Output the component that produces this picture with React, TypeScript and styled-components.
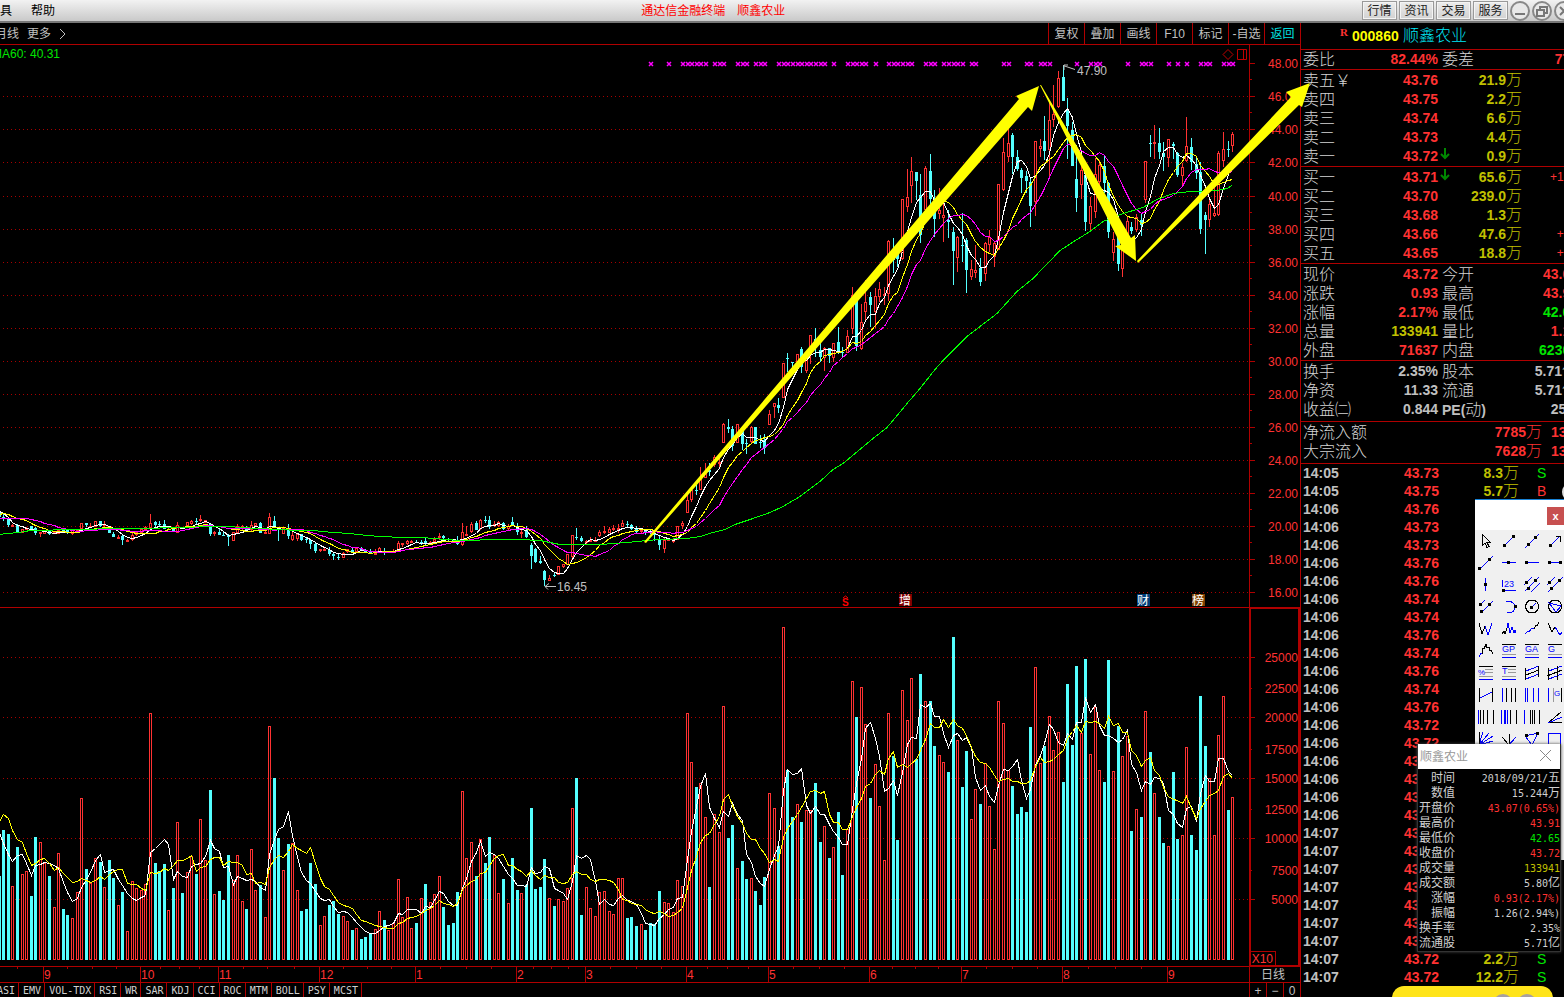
import React from "react";
import styled, { createGlobalStyle, css } from "styled-components";

const RED = "#ff3232";
const LINE = "#b00000";
const CYAN = "#54ffff";
const GREY = "#c0c0c0";
const GOLD = "#c0c000";
const GREEN = "#00e600";
const SANS = `"Liberation Sans", "Noto Sans CJK SC", sans-serif`;
const MONO = `"DejaVu Sans Mono", "Noto Sans CJK SC", monospace`;

const GlobalStyle = createGlobalStyle`
  *, *::before, *::after { box-sizing: border-box; }
  body { margin: 0; background: #000; overflow: hidden; }
  button { font: inherit; color: inherit; background: none; border: 0; padding: 0; margin: 0; cursor: pointer; }
  table { border-collapse: collapse; border-spacing: 0; table-layout: fixed; }
  td, th { padding: 0; font-weight: normal; text-align: left; }
`;

/* ---------- chart data: every reading is in thirds of a pixel ---------- */

const BAR_STEP = 4.586;
const barX = (i: number) => Math.round(3.2 + i * BAR_STEP);
const FIRST = -1;

const VOLUME = `c828 c690 c702 r859 c741 r823 r814 c888 c711 r727 r790 c828 r922 r760 c927 c945 r955 r877 r595 c807 r850
r775 c786 r862 c780 c834 r916 c876 r994 r844 r865 r871 r853 r340 c789 c814 c792 r931 c864 r667 c879 r817 r769 c822 r658
r781 c570 r883 c873 c900 c765 r841 r766 r904 c927 r748 r871 c855 r952 r379 c534 c714 r811 c732 r730 r871 c933 c927 c789
c852 r976 r949 c915 c903 c942 r949 r964 c990 r985 c1017 c1011 c999 r988 r934 c960 r990 r970 r838 r952 r892 r985 c969
r895 c852 r907 r883 r829 c921 c975 c969 c876 r574 r775 r727 c828 r718 c789 c711 r766 r880 c837 r910 c774 c870 r880 c855
c624 c867 c861 c777 r895 c918 r898 r904 r865 r625 c534 c945 r862 r925 r949 r877 r874 r934 r943 r835 r835 c954 c951 c978
r973 c990 c969 c972 c873 r907 r910 r937 r841 r859 r340 r487 c561 r550 r652 c861 r643 r697 r319 c714 c675 r805 c783 c837
r835 c873 c915 c831 r580 r625 c738 r82 c510 c651 r613 c666 r631 r631 c549 c726 r679 c774 r742 c636 c825 r688 r244 c351
r262 r373 c594 r493 r619 r781 r340 c468 c720 r271 r361 r235 c477 c222 r304 c303 c438 r466 r487 c516 c111 r421 c561 c453
r658 r568 c612 r490 r619 r748 r304 r370 r511 c558 c642 c621 c636 c381 r202 r490 c438 r349 r451 r397 c546 c252 c435 c198
r400 c177 r463 r322 r511 c546 c180 r514 c378 r469 r409 c693 r628 c651 r334 c456 r580 c651 c729 r739 c516 c717 r706 r442
c705 c750 c288 c438 r535 r706 r406 r289 c630 r592`
  .split(/\s+/)
  .map((s) => ({ up: s[0] === "r", top: Number(s.slice(1)) }));

/* colour, high, body top, body bottom, low */
const EARLY = `c340,340,350,350 c342,350,358,362 c355,357,375,380 r372,375,380,380 c373,375,396,399 r388,388,398,398 r380,383,387,390
c378,379,388,388 c381,385,400,405 r396,397,401,411 r391,393,401,402 c391,392,402,405 r395,397,400,402 r387,389,401,401
c388,389,397,397 c389,391,400,402 r390,391,402,404 r386,388,394,395 r370,370,387,390 c369,370,375,381 r369,378,383,384
r363,363,380,382 c363,364,379,381 r363,372,376,380 c380,383,398,399 c396,402,411,411 r405,411,413,413 c405,408,419,435
r417,420,423,426 r400,405,421,422 r393,397,406,408 r385,388,398,402 r378,380,390,392 r342,370,384,384 c363,366,375,382
c363,373,376,378 c360,373,386,388 r378,378,383,390 c380,382,392,393 r367,375,398,398 c380,381,386,386 r366,367,378,380
r360,364,371,376 c354,364,367,376 r345,358,363,366 r361,361,368,370 c369,372,402,408 r394,395,403,407 c386,396,405,406
c393,404,408,408 c402,406,412,438 r396,397,422,422 r372,379,398,400 r374,378,381,390 c378,381,389,392 r363,374,391,392
r369,370,377,382 c366,369,398,399 r390,397,399,402 r339,352,401,401 c348,363,380,384 c381,382,390,423 r381,383,401,402
c373,384,408,416 r396,405,419,422 r402,402,417,422 c402,403,420,422 c411,417,420,429 c417,421,431,447 c430,432,454,459
r447,448,453,455 r441,447,450,453 c441,449,462,467 c459,462,468,480 c461,471,473,480 r456,458,473,474 r446,448,457,460
c442,451,456,459 r444,445,456,458 c440,443,450,452 c446,449,455,457 c448,452,461,462 r447,458,463,465 r441,445,455,459
c444,452,455,465 r453,454,457,458 r447,452,455,458 r423,430,450,450 r429,430,434,441 r420,424,431,434 r420,424,428,429
c420,426,429,430 c420,427,431,435 c415,424,430,435 r424,425,428,430 r411,416,427,428 r399,409,414,420 c405,408,414,417
c414,417,420,422 c418,420,424,425 c408,421,431,434 r369,397,436,438 r379,402,404,405 r366,373,397,399 c363,369,389,391
r357,361,387,389 c348,360,363,369 c348,361,382,387 r364,373,378,382 r363,367,378,380 c366,368,388,390 r373,377,388,390
c351,367,374,376 c369,377,396,405 r389,396,402,415 c378,391,411,415 c429,436,467,507 c444,446,485,488 c469,483,488,491
c510,512,540,558 r526,535,542,543 c517,524,528,530 r498,499,525,526 r492,493,502,504 r461,463,496,496 r405,406,470,475
c384,410,414,420 c408,415,422,425 r420,424,429,436 r411,421,425,427 r412,420,424,425 r391,397,407,411 r378,392,397,403
r380,387,398,399 r375,385,390,393 r372,384,387,398 r360,369,380,382 c363,373,376,380 c372,374,388,390 c378,388,396,399
r383,389,393,400 c388,390,399,404 c388,394,399,401 c397,402,406,423 c406,421,435,450 r414,420,446,459 r413,416,419,420
r417,421,426,429 r378,379,421,421 r364,370,378,387 r278,300,338,339 r262,271,299,306 c243,270,273,285 r201,232,269,270
r190,213,233,234 c190,210,216,228 r165,171,196,200 r168,186,190,201 r69,72,128,128 c57,81,87,99 c78,88,138,152
r72,73,130,130 c86,89,131,150 c117,128,132,162 r79,82,125,129 c81,82,131,133 c105,125,128,144 c102,120,143,162
r30,42,74,75 r10,10,20,54`;
const LATE = `c1044,1065,1073,1089 r938,940,1043,1043 c909,925,927,965 c936,936,939,970 r912,913,935,950 c891,897,950,969
r910,915,962,968 r855,856,915,942 c834,867,890,921 c879,900,922,935 r891,895,924,963 c893,895,917,939 r879,880,925,936
c831,876,908,912 c891,905,908,921 r840,859,908,910 r711,735,838,852 c738,738,887,903 r762,817,898,899 r690,757,785,810
c726,741,765,831 r714,739,787,835 r696,718,742,755 r711,733,735,765 r570,573,733,752 c564,600,630,669 c590,600,627,651
r447,448,627,630 r357,442,470,486 r321,364,409,459 c366,366,392,450 c372,435,555,580 r348,355,480,490 c312,363,448,465
c420,455,507,560 r414,481,493,507 r430,495,503,576 c480,510,515,564 c531,546,602,705 r558,562,623,666 c490,585,588,636
c565,570,660,729 r630,658,681,690 r585,660,668,684 c624,654,696,708 r576,580,671,693 r540,562,584,606 r575,580,620,651
r402,403,599,600 r264,307,419,424 r235,280,320,336 c249,255,321,372 c300,321,357,363 c355,360,384,429 c363,378,392,429
c380,395,468,531 r272,274,455,498 r267,289,296,322 c198,273,303,330 r150,210,300,386 r105,193,211,230 r63,85,170,175
c45,81,153,153 c144,177,228,327 c216,240,348,348 c285,387,444,486 r340,361,404,447 c370,375,516,543 r440,469,523,543
r325,373,485,504 r330,345,397,410 c315,347,400,430 c395,400,546,564 r545,568,608,633 c530,540,641,663 r590,600,656,681
r501,513,560,590 c516,531,543,553 r492,501,540,545 c490,510,525,558 r333,334,449,460 c255,279,282,321 r225,277,279,327
c234,279,306,327 c276,309,321,363 r267,268,325,350 c276,283,288,327 c306,309,375,381 r340,352,377,408 r201,289,332,336
c264,290,336,360 c318,342,368,387 c336,366,537,552 c486,495,510,612 r450,463,509,531 r400,490,497,502 r303,310,496,498
r246,298,332,350 c273,297,300,321 r246,253,288,306`;

const parseCandles = (src: string, shift: number) =>
  src.split(/\s+/).map((s) => {
    const [high, top, bottom, low] = s.slice(1).split(",").map((n) => Number(n) + shift);
    return { up: s[0] === "r", high, top, bottom, low };
  });
const CANDLES = [...parseCandles(EARLY, 1050), ...parseCandles(LATE, 0)];

const average = (values: number[], n: number, lead: number[]) =>
  values.map((_, i) =>
    i < lead.length ? lead[i] : values.slice(Math.max(0, i - n + 1), i + 1).reduce((a, b) => a + b, 0) / Math.min(n, i + 1)
  );
const toLine = (values: number[], dy: number) =>
  values.map((v, i) => `${barX(i + FIRST) + 0.5},${Math.round(v / 3 + dy) + 0.5}`).join(" ");

const CLOSES = CANDLES.map((c) => (c.up ? c.top : c.bottom));
const up1050 = (a: number[]) => a.map((v) => v + 1050);
const MA5 = toLine(average(CLOSES, 5, up1050([334, 338, 352, 365, 375])), 5);
const MA10 = toLine(average(CLOSES, 10, up1050([342, 340, 343, 349, 354, 356, 359, 369, 376])), 5);
const MA15 = toLine(
  average(CLOSES, 15, up1050([355, 355, 354, 354, 354, 354, 354, 357, 360, 364, 368, 371, 376, 380, 384, 387, 389])),
  5
);
const MA60_POINTS: [number, number][] = [
  [0, 1451], [20, 1448], [60, 1446], [90, 1441], [140, 1440], [180, 1438], [260, 1437], [320, 1435], [460, 1435],
  [500, 1432], [570, 1431], [600, 1428], [690, 1429], [720, 1432], [780, 1435], [830, 1437], [900, 1439], [940, 1441],
  [1000, 1447], [1050, 1450], [1100, 1454], [1140, 1459], [1210, 1460], [1270, 1461], [1300, 1465], [1380, 1469],
  [1500, 1467], [1560, 1467], [1620, 1471], [1680, 1481], [1700, 1483], [1800, 1483], [1880, 1476], [1940, 1470],
  [1980, 1468], [2060, 1464], [2100, 1458], [2140, 1445], [2175, 1436], [2205, 1421], [2260, 1403], [2310, 1387],
  [2350, 1368], [2400, 1337], [2459, 1293], [2500, 1256], [2530, 1238], [2620, 1165], [2660, 1132], [2695, 1092],
  [2720, 1060], [2760, 1015], [2805, 957], [2830, 930], [2900, 857], [2990, 790], [3050, 724], [3100, 684], [3180, 600],
  [3230, 567], [3270, 543], [3310, 512], [3360, 493], [3430, 470], [3470, 448], [3520, 428], [3570, 422], [3650, 421],
  [3680, 413], [3696, 405],
];
const MA60 = MA60_POINTS.map(([x, y]) => `${Math.round(x / 3)},${Math.round(y / 3 + 5) + 0.5}`).join(" ");

const VOL_TOPS = VOLUME.map((v) => v.top);
const VMA5 = toLine(average(VOL_TOPS, 5, [697, 728, 762, 784, 764]), -8);
const VMA10 = toLine(average(VOL_TOPS, 10, [662, 643, 655, 690, 716, 727, 760, 795, 790]), -8);

const SIGNALS = [
  [141, 141], [145, 145], [148, 153], [155, 157], [160, 162], [164, 166], [169, 179], [181, 181], [184, 188], [190, 190],
  [193, 198], [201, 203], [205, 209], [211, 212], [218, 219], [223, 224], [226, 228], [234, 234], [237, 239], [245, 245],
  [248, 250], [254, 254], [256, 256], [258, 258], [261, 263], [266, 268],
].flatMap(([a, b]) => Array.from({ length: b - a + 1 }, (_, k) => a + k));

const PRICE_Y = [18, 51, 84, 117, 151, 184, 217, 250, 283, 316, 349, 382, 415, 448, 481, 514, 547];
const VOLUME_Y = [49, 80, 109, 141, 170, 201, 230, 262, 291];
const VOLUME_LABELS = ["25000", "22500", "20000", "17500", "15000", "12500", "10000", "7500", "5000"];

const MONTHS: [number, string][] = [
  [43, "9"], [140, "10"], [218, "11"], [319, "12"], [415, "1"], [516, "2"], [585, "3"], [686, "4"], [768, "5"],
  [869, "6"], [961, "7"], [1062, "8"], [1167, "9"],
];
const WEEKS = [
  17, 67, 92, 116, 160, 179, 199, 243, 267, 294, 343, 367, 391, 440, 466, 491, 533, 551, 568, 610, 636, 661, 707, 727,
  748, 793, 819, 844, 892, 915, 938, 986, 1012, 1037, 1088, 1115, 1141,
];

/* ---------- frame ---------- */

const Terminal = styled.div`
  position: relative;
  display: flex;
  flex-direction: column;
  min-height: 100vh;
  overflow: hidden;
  background: #000;
  color: ${GREY};
  font: 12px/14px ${SANS};
  white-space: nowrap;
`;
const TitleBar = styled.header`
  display: flex;
  align-items: center;
  height: 23px;
  overflow: hidden;
  background: linear-gradient(#f2f2f2, #c9c9c9);
  border-bottom: 2px solid #777;
  color: #000;
`;
const Menu = styled.nav`
  display: flex;
  gap: 19px;
  flex: 0 0 41%;
`;
const Title = styled.h1`
  display: flex;
  gap: 12px;
  margin: 0;
  font-size: 12px;
  font-weight: normal;
  color: #f00;
`;
const TitleTools = styled.div`
  display: flex;
  align-items: center;
  gap: 2px;
  margin: 0 -10px 0 auto;
`;
const TitleButton = styled.button`
  width: 35px;
  height: 19px;
  border: 1px solid #999;
  box-shadow: inset 0 0 0 1px #f4f4f4;
  background: linear-gradient(#ececec, #d2d2d2);
  color: #222;
`;
const RoundButton = styled.button`
  display: flex;
  flex: none;
  width: 20px;
  height: 20px;
`;
const Workspace = styled.div`
  display: flex;
  flex: 1;
  align-items: stretch;
`;
const ChartColumn = styled.main`
  position: relative;
  display: flex;
  flex: 1;
  flex-direction: column;
  min-width: 0;
`;
const Toolbar = styled.div`
  display: flex;
  height: 22px;
  border-bottom: 1px solid ${LINE};
  overflow: hidden;
`;
const Periods = styled.div`
  display: flex;
  align-items: center;
  gap: 8px;
  flex: 1;
  margin-left: -5px;
`;
const ToolButton = styled.button<{ $active?: boolean }>`
  width: 36px;
  border-left: 1px solid ${LINE};
  color: ${(p) => (p.$active ? "#00e0e0" : GREY)};
`;
const Pane = styled.section`
  display: flex;
  border-bottom: 1px solid ${LINE};
`;
const Plot = styled.div`
  position: relative;
  display: flex;
  justify-content: flex-end;
  flex: 1;
  min-width: 0;
  overflow: hidden;
`;
const Drawing = styled.svg`
  display: block;
  flex: none;
  font: 12px ${SANS};
`;
const Legend = styled.div`
  position: absolute;
  top: 2px;
  left: -8px;
  color: ${GREEN};
`;
const Axis = styled.div<{ $boxed?: boolean }>`
  flex: 0 0 51px;
  border-left: 1px solid ${LINE};
  ${(p) =>
    p.$boxed &&
    css`
      border: 2px solid ${LINE};
      border-top-width: 1px;
      border-bottom-width: 1px;
    `}
`;
const AxisCell = styled.button`
  flex: 0 0 51px;
  border-left: 1px solid ${LINE};
  padding-right: 4px;
`;
const TabRow = styled.div`
  display: flex;
  height: 14px;
  overflow: hidden;
`;
const Tabs = styled.nav`
  display: flex;
  flex: 1;
  margin-left: -7px;
  font: 10px/12px ${MONO};
`;
const Tab = styled.button`
  padding: 2px 3px 0 4px;
  border-right: 1px solid ${LINE};
  color: #d0d0d0;
`;
const ZoomButtons = styled.div`
  display: flex;
  flex: 0 0 51px;
`;
const ZoomButton = styled.button`
  flex: 1;
  border-left: 1px solid ${LINE};
  padding-top: 1px;
`;
const Overlay = styled.svg`
  position: absolute;
  z-index: 1;
  top: 0;
  right: -14px;
  pointer-events: none;
`;

/* ---------- quote panel ---------- */

const QuotePanel = styled.aside`
  flex: 0 0 264px;
  min-width: 0;
  overflow: hidden;
  border-left: 1px solid ${LINE};
`;
const Instrument = styled.h2`
  display: flex;
  align-items: center;
  height: 26px;
  margin: 0;
  padding-left: 39px;
  font-size: 16px;
  font-weight: 300;
  color: #00e8f8;
`;
const Flag = styled.span`
  align-self: flex-start;
  width: 12px;
  padding-top: 2px;
  font: bold 11px/14px "Liberation Serif", serif;
  color: ${RED};
`;
const Code = styled.span`
  width: 51px;
  font-size: 14px;
  font-weight: bold;
  color: #ff0;
`;
const Block = styled.section<{ $top?: number; $bottom?: number }>`
  border-top: 1px solid ${LINE};
  padding-top: ${(p) => p.$top ?? 1}px;
  padding-bottom: ${(p) => p.$bottom ?? 0}px;
`;
const Sheet = styled.table<{ $row: number }>`
  width: 278px;
  margin-left: 2px;
  th, td {
    height: ${(p) => p.$row}px;
    line-height: ${(p) => p.$row}px;
  }
`;
const Label = styled.th`
  font-size: 16px;
  font-weight: 300 !important;
  color: #d4d4d4;
`;
const Num = styled.td<{ $c?: string; $left?: boolean }>`
  font-size: 14px;
  font-weight: bold;
  text-align: ${(p) => (p.$left ? "left" : "right")} !important;
  color: ${(p) => p.$c || RED};
`;
const Unit = styled.span`
  font-size: 16px;
  font-weight: 300;
  line-height: 0;
`;
const Ratio = styled.span`
  font-size: 14px;
  font-weight: bold;
  line-height: 0;
  color: ${GREY};
`;
const Delta = styled.td`
  padding-left: 28px;
  color: ${RED};
`;
const Side = styled.td<{ $buy?: boolean }>`
  padding-left: 18px;
  font-size: 14px;
  color: ${(p) => (p.$buy ? RED : GREEN)};
`;

/* ---------- floating windows ---------- */

const Palette = styled.section`
  position: absolute;
  z-index: 2;
  top: 499px;
  right: 0;
  width: 89px;
  height: 361px;
  overflow: hidden;
  border-top: 1px solid #1883d7;
  background: #f0f0f0;
`;
const PaletteHead = styled.header`
  display: flex;
  justify-content: flex-end;
  align-items: center;
  height: 30px;
  padding-top: 2px;
  background: #fff;
`;
const CloseButton = styled.button`
  width: 17px;
  height: 18px;
  background: #c75050;
  color: #fff;
  font: bold 11px/16px ${SANS};
`;
const PaletteGrid = styled.div`
  display: grid;
  grid-template-columns: repeat(4, 23px);
  grid-auto-rows: 22px;
`;
const PaletteButton = styled.button`
  display: flex;
  align-items: center;
  padding-left: 3px;
`;
const InfoBox = styled.section`
  position: absolute;
  z-index: 3;
  top: 744px;
  right: 3px;
  width: 144px;
  border: 1px solid #333;
  border-top: 0;
  background: #000;
  box-shadow: 0 0 3px #444;
`;
const InfoHead = styled.header`
  display: flex;
  align-items: center;
  justify-content: space-between;
  height: 25px;
  padding: 0 9px 0 2px;
  background: #fff;
  color: #999;
`;
const InfoTable = styled.table`
  width: 100%;
  margin-top: 2px;
  th, td {
    height: 15px;
    line-height: 15px;
    text-align: right;
  }
  th {
    width: 37px;
    color: #d0d0d0;
  }
`;
const InfoValue = styled.td<{ $c?: string }>`
  font: 10px ${MONO};
  color: ${(p) => p.$c || "#d0d0d0"};
`;
const InfoUnit = styled.span`
  font-size: 12px;
  line-height: 0;
`;
const Bubble = styled.div`
  position: absolute;
  z-index: 3;
  top: 986px;
  right: 11px;
  display: flex;
  justify-content: flex-end;
  gap: 4px;
  width: 161px;
  height: 30px;
  padding: 8px 16px 0 0;
  border-radius: 12px;
  background: #ffe41a;
`;
const BubbleDot = styled.i`
  width: 20px;
  height: 20px;
  border-radius: 50%;
  background: #a8a0a0;
`;
const EdgeKnob = styled.i`
  position: absolute;
  z-index: 2;
  top: 483px;
  right: -16px;
  width: 18px;
  height: 18px;
  border-radius: 50%;
  background: #ddd;
`;

/* ---------- palette icons ---------- */

type Icon = { p?: [string, string][]; dots?: [number, number][]; t?: [string, number, number, number] };
const B = "#00f";
const K = "#000";
const S = "#999";
const ruled: [string, string][] = [[K, "M1 1.5h14"], [S, "M1 11.5h14"], [B, "M1 14.5h14"]];
const ICONS: Icon[] = [
  { p: [[K, "M4.5 1.5v11l2.500-2.500 2 4.500 2-1-2-4h3.500z"]] },
  { p: [[B, "M3 13L12 4"]], dots: [[3.5, 12.5], [12.5, 3.5]] },
  { p: [[B, "M1 15L15 1"]], dots: [[4.5, 11.5], [11.5, 4.5]] },
  { p: [[B, "M3 13L13 3"], [K, "M8.500 3.500h5v5"]], dots: [[3.5, 12.5]] },
  { p: [[B, "M1 15L15 1"]], dots: [[1.5, 13.5], [11.5, 4.5]] },
  { p: [[B, "M1 7.500h14"]], dots: [[7.5, 7.5]] },
  { p: [[B, "M1 7.500h14"]], dots: [[2.5, 7.5]] },
  { p: [[B, "M1 7.500h14"]], dots: [[2.5, 7.5], [13.5, 7.5]] },
  { p: [[B, "M7.500 1v13"]], dots: [[7.5, 7.5]] },
  { p: [[B, "M2 13.500h13M1.500 3v7"]], dots: [[2.5, 13.5]], t: ["23", 3, 10, 9] },
  { p: [[B, "M0 8L8 0M1 14L15 0M7 15L16 6"]], dots: [[2.5, 5.5], [4.5, 11.5], [11.5, 3.5]] },
  { p: [[B, "M0 8L8 0M1 15L16 0"]], dots: [[2.5, 5.5], [4.5, 11.5], [12.5, 3.5]] },
  { p: [[B, "M1 7L7 1M4 13L15 2"]], dots: [[2.5, 5.5], [3.5, 12.5], [11.5, 5.5]] },
  { p: [[B, "M5 2c5 0 9 2 9 6s-3 6-8 6"]], dots: [[14.5, 7.5]] },
  { p: [[K, "M8 1a6.500 6.500 0 1 0 .1 0z"], [B, "M8 8l4-4"]], dots: [[7.5, 8.5]] },
  { p: [[K, "M8 1a6.500 6.500 0 1 0 .1 0z"], [B, "M2 4l12 3-5 6z"]] },
  { p: [[K, "M1 2l3 11 3-8"], [B, "M7 5l3 9 4-12"]] },
  { p: [[K, "M1 13l2-3 1 3 2-6"], [B, "M6 7l1-5 2 10 2-6 2 6 1-3 1 3"]] },
  { p: [[B, "M1 13l3-3 1 1 3-4 2 1"], [K, "M10 8l2-4 1 1 2-4"]] },
  { p: [[K, "M1 2l4 9 3-5"], [B, "M8 6l5 8 2-3"]] },
  { p: [[B, "M1 14l2-4 1 1"], [K, "M4 11l1-6 1 1 2-5 1 4 2-1 1 4 1-1 2 4"]] },
  { p: ruled, t: ["GP", 1, 9, 9] },
  { p: ruled, t: ["GA", 1, 9, 9] },
  { p: ruled, t: ["G", 1, 9, 9] },
  { p: [[K, "M1 1.500h14"], [S, "M7 4.500h8M7 7.500h8M1 11.500h14"], [B, "M1 14.500h14"]], t: ["%", 0, 10, 8] },
  { p: [[K, "M1 1.500h14"], [S, "M7 4.500h8M7 7.500h8M1 11.500h14"], [B, "M1 14.500h14"]], t: ["T", 1, 9, 9] },
  { p: [[B, "M2 6L15 1M2 14L15 9"], [K, "M1.500 3v12M14.500 1v11M2 10L15 5"]] },
  { p: [[B, "M2 6L15 1M2 14L15 9"], [K, "M1.500 3v12M10.500 1v14M0 11L15 5"]] },
  { p: [[K, "M1.500 1v14M14.500 1v14"], [B, "M2 11L14 5"]] },
  { p: [[B, "M1.500 1v14"], [K, "M5.500 1v14M10.500 1v14M14.500 1v14"]] },
  { p: [[B, "M1.500 1v14M3.500 1v14M9.500 1v14M14.500 1v14"]] },
  { p: [[B, "M1.500 1v14"], [S, "M6.500 1v14"], [K, "M14.500 1v14"]], t: ["G", 7, 9, 8] },
  { p: [[B, "M.500 1v14"], [K, "M2.500 1v14M5.500 1v14M9.500 1v14M15.500 1v14"]] },
  { p: [[B, "M.500 1v14M3.500 1v14M4.500 1v14M6.500 1v14"], [K, "M9.500 1v14M15.500 1v14"]] },
  { p: [[B, "M.500 1v14"], [K, "M6.500 1v14M8.500 1v14M10.500 1v14M15.500 1v14"]] },
  { p: [[K, "M1 14L14 3M1 14L15 13"], [B, "M1 14L15 8"]] },
  { p: [[B, "M1 14L15 5M1 14L11 2M1 14L5 1M1 14L15 10"], [K, "M1.500 1v14"]] },
  { p: [[K, "M8.500 14V3M8 14L1 6"], [B, "M8 14L15 6"]] },
  { p: [[B, "M1 5l13-3-6 12z"]], dots: [[2.5, 4.5], [13.5, 2.5]] },
  { p: [[B, "M1.500 2.500h12v12h-12z"]] },
];

const ToolIcon = ({ icon }: { icon: Icon }) => (
  <svg width="16" height="16" viewBox="0 0 16 16" fill="none" shapeRendering="crispEdges">
    {icon.p?.map(([c, d], i) => <path key={i} d={d} stroke={c} />)}
    {icon.dots?.map(([x, y], i) => <rect key={i} x={x - 1.5} y={y - 1.5} width="3" height="3" fill="#000" />)}
    {icon.t && (
      <text x={icon.t[1]} y={icon.t[2]} fontSize={icon.t[3]} fontFamily="Liberation Sans" fill={B}>
        {icon.t[0]}
      </text>
    )}
  </svg>
);

/* ---------- charts ---------- */

const Grid = ({ ys }: { ys: number[] }) => (
  <g stroke="#a80000" strokeDasharray="1 3">
    {ys.map((y) => <line key={y} x1="3" x2="1249" y1={y + 0.5} y2={y + 0.5} />)}
  </g>
);

const Badge = ({ x, fill, text }: { x: number; fill: string; text: string }) => (
  <g>
    <rect x={x} y="549" width="13" height="12" fill={fill} />
    <text x={x} y="560" fill="#fff">{text}</text>
  </g>
);

const PriceChart = () => (
  <Drawing width="1249" height="562" role="img" aria-label="顺鑫农业 日线">
    <g shapeRendering="crispEdges" fill="none">
      <Grid ys={PRICE_Y.slice(1)} />
      {CANDLES.map((c, i) => {
        const x = barX(i + FIRST);
        const [h, t, b, l] = [c.high, c.top, c.bottom, c.low].map((v) => Math.round(v / 3) + 5);
        const body = Math.max(1, b - t);
        return c.up ? (
          <g key={i} stroke={RED}>
            {t > h && <line x1={x + 0.5} x2={x + 0.5} y1={h} y2={t} />}
            {l > b && <line x1={x + 0.5} x2={x + 0.5} y1={b} y2={l} />}
            <rect x={x - 0.5} y={t + 0.5} width="2" height={Math.max(1, body - 1)} fill="#000" />
          </g>
        ) : (
          <g key={i} fill={CYAN}>
            <rect x={x} y={h} width="1" height={Math.max(1, l - h)} />
            <rect x={x - 1} y={t} width="3" height={body} />
          </g>
        );
      })}
      <polyline points={MA5} stroke="#fff" />
      <polyline points={MA10} stroke="#ff0" />
      <polyline points={MA15} stroke="#f0f" />
      <polyline points={MA60} stroke="#0f0" />
    </g>
    <g stroke="#f0f" strokeWidth="1.5">
      {SIGNALS.map((i) => <path key={i} d={`M${barX(i) - 1} 17l4 4m0-4l-4 4`} />)}
    </g>
    <g fill={GREY} stroke="none">
      <text x="1077" y="30">47.90</text>
      <text x="557" y="546">16.45</text>
    </g>
    <g fill="none" stroke={GREY}>
      <path d="M1063 20.500l12 4M1064 25v-5h4" />
      <path d="M545 541.500h11M549 538.500l-4 3 3 3" />
    </g>
    <g fill="none" stroke="#c00000">
      <path d="M1228 4.500l5 5-5 5-5-5z" />
      <path d="M1237.500 4.500h9v10h-9zM1243.500 4.500v10" />
    </g>
    <text x="842" y="561" fill="#f00" fontWeight="bold" fontSize="10">S</text>
    <path d="M843 553l2.500-2 2.500 2" fill="none" stroke="#f00" />
    <Badge x={899} fill="#800000" text="增" />
    <Badge x={1137} fill="#003c78" text="财" />
    <Badge x={1192} fill="#804000" text="榜" />
  </Drawing>
);

const VolumeChart = () => (
  <Drawing width="1249" height="358" role="img" aria-label="成交量">
    <g shapeRendering="crispEdges" fill="none">
      <Grid ys={VOLUME_Y.filter((_, i) => i % 2 === 0)} />
      {VOLUME.map((v, i) => {
        const x = barX(i + FIRST);
        const y = Math.round(v.top / 3) - 8;
        return v.up ? (
          <rect key={i} x={x - 0.5} y={y + 0.5} width="2" height={351 - y} stroke={RED} fill="#000" />
        ) : (
          <rect key={i} x={x - 1} y={y} width="3" height={352 - y} fill={CYAN} />
        );
      })}
      <polyline points={VMA5} stroke="#fff" />
      <polyline points={VMA10} stroke="#ff0" />
    </g>
  </Drawing>
);

/* ---------- quote data ---------- */

const ASKS = [["卖五￥", "43.76", "", "21.9"], ["卖四", "43.75", "", "2.2"], ["卖三", "43.74", "", "6.6"], ["卖二", "43.73", "", "4.4"], ["卖一", "43.72", "v", "0.9"]];
const BIDS = [["买一", "43.71", "v", "65.6", "+1"], ["买二", "43.70", "", "239.0"], ["买三", "43.68", "", "1.3"], ["买四", "43.66", "", "47.6", " +"], ["买五", "43.65", "", "18.8", " +"]];

const Book = ({ rows }: { rows: string[][] }) => (
  <Sheet $row={19}>
    <colgroup><col width="50" /><col width="85" /><col width="14" /><col width="70" /><col /></colgroup>
    <tbody>
      {rows.map(([label, price, arrow, vol, delta]) => (
        <tr key={label}>
          <Label scope="row">{label}</Label>
          <Num>{price}</Num>
          <td>
            {arrow && (
              <svg width="14" height="12" viewBox="0 0 14 12" fill="none" stroke="#080" strokeWidth="2">
                <path d="M7 0v10M3 6l4 4 4-4" />
              </svg>
            )}
          </td>
          <Num $c={GOLD}>{vol}<Unit>万</Unit></Num>
          <Delta>{delta && (delta.startsWith(" ") ? "\u00a0\u00a0" + delta.trim() : delta)}</Delta>
        </tr>
      ))}
    </tbody>
  </Sheet>
);

type Stat = [string, string, string, string, string, string];
const Stats = ({ rows }: { rows: Stat[] }) => (
  <Sheet $row={19}>
    <colgroup><col width="50" /><col width="85" /><col width="4" /><col width="60" /><col width="76" /><col /></colgroup>
    <tbody>
      {rows.map(([l1, v1, c1, l2, v2, c2]) => (
        <tr key={l1}>
          <Label scope="row">{l1}</Label>
          <Num $c={c1}>{v1}</Num>
          <td />
          <Label scope="row">{l2.startsWith("PE") ? <><Ratio>PE(</Ratio>动<Ratio>)</Ratio></> : l2}</Label>
          <Num $c={c2}>{v2.replace("亿", "")}{v2.endsWith("亿") && <Unit>亿</Unit>}</Num>
          <td />
        </tr>
      ))}
    </tbody>
  </Sheet>
);

const TICK_PRICES = "43.73 43.75 43.76 43.73 43.73 43.76 43.76 43.74 43.74 43.76 43.74 43.76 43.74 43.76 43.72".split(" ");
const TICK_TRADES: Record<number, [string, string]> = { 0: ["8.3", "S"], 1: ["5.7", "B"], 27: ["2.2", "S"], 28: ["12.2", "S"] };
const TICKS = Array.from({ length: 29 }, (_, i) => ({
  time: i < 2 ? "14:05" : i < 20 ? "14:06" : "14:07",
  price: TICK_PRICES[i] || "43.72",
  trade: TICK_TRADES[i],
}));

const INFO: [string, string, string, string?][] = [
  ["时间", "2018/09/21/", "五"],
  ["数值", "15.244", "万"],
  ["开盘价", "43.07(0.65%)", "", RED],
  ["最高价", "43.91", "", RED],
  ["最低价", "42.65", "", GREEN],
  ["收盘价", "43.72", "", RED],
  ["成交量", "133941", "", GOLD],
  ["成交额", "5.80", "亿"],
  ["涨幅", "0.93(2.17%)", "", RED],
  ["振幅", "1.26(2.94%)", ""],
  ["换手率", "2.35%", ""],
  ["流通股", "5.71", "亿"],
];

export default function App() {
  return (
    <Terminal>
      <GlobalStyle />
      <TitleBar>
        <Menu><button>具</button><button>帮助</button></Menu>
        <Title><span>通达信金融终端</span><span>顺鑫农业</span></Title>
        <TitleTools>
          {["行情", "资讯", "交易", "服务"].map((t) => <TitleButton key={t}>{t}</TitleButton>)}
          {["M5 13h10", "M5 9h7v6h-7zM8 9v-3h7v6h-3", "M6 6l8 8M14 6l-8 8"].map((d, i) => (
            <RoundButton key={d} aria-label={["最小化", "还原", "关闭"][i]}>
              <svg width="20" height="20" fill="none" stroke="#777" strokeWidth="2">
                <circle cx="10" cy="10" r="9" fill="#e8e8e8" stroke="#888" />
                <path d={d} />
              </svg>
            </RoundButton>
          ))}
        </TitleTools>
      </TitleBar>

      <Workspace>
        <ChartColumn>
          <Toolbar>
            <Periods>
              <button>月线</button>
              <button>更多</button>
              <svg width="8" height="12" fill="none" stroke={GREY}><path d="M1 1l5 5-5 5" /></svg>
            </Periods>
            {["复权", "叠加", "画线", "F10", "标记", "-自选", "返回"].map((t) => (
              <ToolButton key={t} $active={t === "返回"}>{t}</ToolButton>
            ))}
          </Toolbar>

          <Pane>
            <Plot><Legend>MA60: 40.31</Legend><PriceChart /></Plot>
            <Axis>
              <Drawing width="50" height="562">
                <g stroke={LINE} shapeRendering="crispEdges">
                  {PRICE_Y.map((y) => <line key={y} x1="0" x2="5" y1={y + 0.5} y2={y + 0.5} />)}
                  {PRICE_Y.slice(1).map((y) => <line key={y} x1="0" x2="2" y1={y - 16.5} y2={y - 16.5} />)}
                </g>
                <g fill={RED} textAnchor="end">
                  {PRICE_Y.map((y, i) => <text key={y} x="48" y={y + 5}>{(48 - i * 2).toFixed(2)}</text>)}
                </g>
              </Drawing>
            </Axis>
          </Pane>

          <Pane>
            <Plot><VolumeChart /></Plot>
            <Axis $boxed>
              <Drawing width="47" height="356">
                <g stroke={LINE} shapeRendering="crispEdges">
                  {VOLUME_Y.map((y, i) => <line key={y} x1="0" x2={i % 2 ? 1 : 4} y1={y - 0.5} y2={y - 0.5} />)}
                  <path d="M0 342.500h24.500v14" fill="none" />
                </g>
                <g fill={RED} textAnchor="end">
                  {VOLUME_Y.map((y, i) => <text key={y} x="47" y={y + 4}>{VOLUME_LABELS[i]}</text>)}
                  <text x="22" y="354">X10</text>
                </g>
              </Drawing>
            </Axis>
          </Pane>

          <Pane>
            <Plot>
              <Drawing width="1249" height="15">
                <g stroke={LINE} shapeRendering="crispEdges">
                  {MONTHS.map(([x]) => <line key={x} x1={x + 0.5} x2={x + 0.5} y1="0" y2="15" />)}
                  {WEEKS.map((x) => <line key={x} x1={x + 0.5} x2={x + 0.5} y1="0" y2="2" />)}
                </g>
                <g fill={RED}>{MONTHS.map(([x, m]) => <text key={x} x={x + 1} y="12">{m}</text>)}</g>
              </Drawing>
            </Plot>
            <AxisCell>日线</AxisCell>
          </Pane>

          <TabRow>
            <Tabs>
              {["ASI", "EMV", "VOL-TDX", "RSI", "WR", "SAR", "KDJ", "CCI", "ROC", "MTM", "BOLL", "PSY", "MCST"].map((t) => (
                <Tab key={t}>{t}</Tab>
              ))}
            </Tabs>
            <ZoomButtons>
              <ZoomButton>+</ZoomButton><ZoomButton>−</ZoomButton><ZoomButton>0</ZoomButton>
            </ZoomButtons>
          </TabRow>

          <Overlay width="1314" height="560" fill="#ff0">
            <polygon points="644,519 1019,76 1016,73 1039,63 1032,88 1028,84 646,520" />
            <polygon points="1040,62 1121,222 1115,223 1136,238 1135,212 1131,215 1041,62" />
            <polygon points="1137,238 1291,74 1286,69 1310,60 1302,84 1299,82 1138,240" />
          </Overlay>
        </ChartColumn>

        <QuotePanel>
          <Instrument><Flag>R</Flag><Code>000860</Code>顺鑫农业</Instrument>
          <Block $top={0}>
            <Stats rows={[["委比", "82.44%", RED, "委差", "770", RED]]} />
          </Block>
          <Block><Book rows={ASKS} /></Block>
          <Block><Book rows={BIDS} /></Block>
          <Block>
            <Stats
              rows={[
                ["现价", "43.72", RED, "今开", "43.07", RED],
                ["涨跌", "0.93", RED, "最高", "43.91", RED],
                ["涨幅", "2.17%", RED, "最低", "42.65", GREEN],
                ["总量", "133941", GOLD, "量比", "1.16", RED],
                ["外盘", "71637", RED, "内盘", "62304", GREEN],
              ]}
            />
          </Block>
          <Block $bottom={2}>
            <Stats
              rows={[
                ["换手", "2.35%", GREY, "股本", "5.71亿", GREY],
                ["净资", "11.33", GREY, "流通", "5.71亿", GREY],
                ["收益㈡", "0.844", GREY, "PE(动)", "25.9", GREY],
              ]}
            />
          </Block>
          <Block $bottom={2}>
            <Sheet $row={19}>
              <colgroup><col width="150" /><col width="89" /><col width="9" /><col /></colgroup>
              <tbody>
                {[["净流入额", "7785"], ["大宗流入", "7628"]].map(([l, v]) => (
                  <tr key={l}>
                    <Label scope="row">{l}</Label>
                    <Num>{v}<Unit>万</Unit></Num>
                    <td />
                    <Num $left>13%</Num>
                  </tr>
                ))}
              </tbody>
            </Sheet>
          </Block>
          <Block $top={0}>
            <Sheet $row={18}>
              <colgroup><col width="50" /><col width="86" /><col width="80" /><col /></colgroup>
              <tbody>
                {TICKS.map((t, i) => (
                  <tr key={i}>
                    <Num $c={GREY} $left>{t.time}</Num>
                    <Num>{t.price}</Num>
                    <Num $c={GOLD}>{t.trade && <>{t.trade[0]}<Unit>万</Unit></>}</Num>
                    <Side $buy={t.trade?.[1] === "B"}>{t.trade?.[1]}</Side>
                  </tr>
                ))}
              </tbody>
            </Sheet>
          </Block>
        </QuotePanel>
      </Workspace>

      <EdgeKnob />
      <Palette aria-label="画线工具">
        <PaletteHead><CloseButton>x</CloseButton></PaletteHead>
        <PaletteGrid>
          {ICONS.map((icon, i) => <PaletteButton key={i} aria-label={`工具 ${i + 1}`}><ToolIcon icon={icon} /></PaletteButton>)}
        </PaletteGrid>
      </Palette>

      <InfoBox>
        <InfoHead>
          顺鑫农业
          <button aria-label="关闭">
            <svg width="11" height="11" fill="none" stroke="#888"><path d="M0 0l11 11M11 0L0 11" /></svg>
          </button>
        </InfoHead>
        <InfoTable>
          <tbody>
            {INFO.map(([label, value, unit, color]) => (
              <tr key={label}>
                <th scope="row">{label}</th>
                <InfoValue $c={color}>{value}{unit && <InfoUnit>{unit}</InfoUnit>}</InfoValue>
              </tr>
            ))}
          </tbody>
        </InfoTable>
      </InfoBox>
      <Bubble><BubbleDot /><BubbleDot /></Bubble>
    </Terminal>
  );
}
